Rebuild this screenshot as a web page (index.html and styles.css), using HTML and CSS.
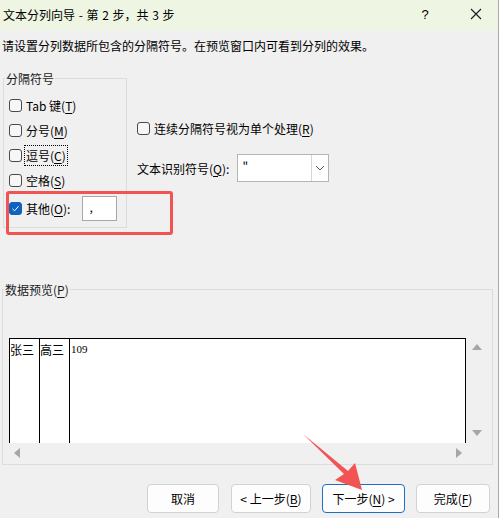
FILE: index.html
```html
<!DOCTYPE html>
<html lang="zh-CN">
<head>
    <meta charset="UTF-8">
    <meta name="viewport" content="width=device-width, initial-scale=1.0">
    <title>文本分列向导</title>
    <link rel="stylesheet" href="styles.css">
</head>
<body>
    <div class="window">
        <header class="titlebar">
            <span class="title">文本分列向导 - 第 2 步，共 3 步</span>
            <span class="help">?</span>
            <svg class="close" width="12" height="12" viewBox="0 0 12 12">
                <path d="M1 1 L11 11 M11 1 L1 11" stroke="#1a1a1a" stroke-width="1.1" fill="none"/>
            </svg>
        </header>

        <p class="intro">请设置分列数据所包含的分隔符号。在预览窗口内可看到分列的效果。</p>

        <section class="options">
            <fieldset class="group delimiters">
                <legend>分隔符号</legend>
                <div class="check"><span class="box"></span>Tab 键(<u>T</u>)</div>
                <div class="check"><span class="box"></span>分号(<u>M</u>)</div>
                <div class="check"><span class="box"></span><span class="focus">逗号(<u>C</u>)</span></div>
                <div class="check"><span class="box"></span>空格(<u>S</u>)</div>
                <div class="check other">
                    <span class="box checked">
                        <svg width="9" height="9" viewBox="0 0 9 9"><path d="M1.5 4.8 L3.6 6.8 L7.6 2.2" stroke="#fff" stroke-width="1" fill="none"/></svg>
                    </span>其他(<u>O</u>):
                    <span class="other-input">,</span>
                </div>
            </fieldset>

            <div class="side">
                <div class="check"><span class="box"></span>连续分隔符号视为单个处理(<u>R</u>)</div>
                <div class="qualifier">
                    <span>文本识别符号(<u>Q</u>):</span>
                    <div class="combo">
                        <span class="combo-value">"</span>
                        <span class="combo-btn">
                            <svg width="10" height="6" viewBox="0 0 10 6"><path d="M1 1 L5 5 L9 1" stroke="#555" stroke-width="1" fill="none"/></svg>
                        </span>
                    </div>
                </div>
            </div>
        </section>

        <fieldset class="group preview">
            <legend>数据预览(<u>P</u>)</legend>
            <div class="preview-row">
                <div class="sheet">
                    <div class="col">张三</div>
                    <div class="col">高三</div>
                    <div class="col last">109</div>
                </div>
                <div class="vscroll">
                    <span class="tri up"></span>
                    <span class="tri down"></span>
                </div>
            </div>
            <div class="hscroll">
                <span class="tri left"></span>
                <span class="tri right"></span>
            </div>
        </fieldset>

        <footer class="buttons">
            <button class="btn cancel">取消</button>
            <button class="btn back">&lt; 上一步(<u>B</u>)</button>
            <button class="btn next default">下一步(<u>N</u>) &gt;</button>
            <button class="btn finish">完成(<u>F</u>)</button>
        </footer>

        <div class="highlight"></div>
        <svg class="arrow" width="80" height="70" viewBox="300 430 80 70">
            <polygon points="303,434 348,471 355,463 362,490 335,480 344,474" fill="#f25353"/>
        </svg>
    </div>
</body>
</html>
```

FILE: styles.css
```css
/* General */
body {
    margin: 0;
    background-color: #ffffff;
    font-family: "Noto Sans CJK SC", sans-serif;
    font-size: 12px;
    color: #000;
}

.window {
    position: relative;
    width: 498px;
    height: 518px;
    background-color: #f0f0f0;
    border-right: 1px solid #a8a8a8;
    overflow: hidden;
}

u {
    text-decoration-thickness: 1px;
    text-underline-offset: 2px;
}

/* Title bar */
.titlebar {
    display: flex;
    align-items: center;
    height: 30px;
    background-color: #eff5e3;
    border-top-right-radius: 7px;
    padding-left: 3px;
}

.title {
    flex: 1;
    line-height: 18px;
    word-spacing: 1px;
}

.help {
    width: 16px;
    text-align: center;
    font-family: "Liberation Sans", sans-serif;
    font-size: 13px;
    margin-right: 37px;
    margin-top: -1px;
}

.close {
    margin-right: 16px;
    margin-top: -2px;
}

.intro {
    margin: 7px 0 15px 2px;
    line-height: 18px;
}

/* Group boxes */
.group {
    border: 1px solid #dcdcdc;
    margin: 0;
    padding: 0;
    box-sizing: border-box;
}

.group legend {
    padding: 0 1px;
    line-height: 17px;
    color: #1a1a1a;
}

.options {
    display: flex;
    align-items: flex-start;
}

.delimiters {
    width: 124px;
    margin-left: 3px;
    padding: 6px 0 5px 5px;
}

.delimiters legend {
    margin-left: -4px;
}

.check {
    display: flex;
    align-items: center;
    height: 25px;
    white-space: nowrap;
}

.box {
    width: 11px;
    height: 11px;
    border: 1px solid #4a4a4a;
    border-radius: 3px;
    background-color: #f7f7f7;
    margin-right: 4px;
    flex-shrink: 0;
    display: flex;
    align-items: center;
    justify-content: center;
}

.box.checked {
    background-color: #0f62be;
    border-color: #0f62be;
}

.focus {
    outline: 1px dotted #000;
    outline-offset: 1px;
    line-height: 17px;
}

.check.other {
    height: 28px;
    margin-top: 1px;
}

.other-input {
    width: 35px;
    height: 25px;
    margin-left: 12px;
    background-color: #fff;
    border: 1px solid #a8a8a8;
    padding-left: 6px;
    box-sizing: border-box;
    line-height: 20px;
}

.side {
    margin-left: 10px;
    padding-top: 48px;
}

.side .check {
    height: 20px;
}

.qualifier {
    display: flex;
    align-items: center;
    margin-top: 16px;
}

.combo {
    display: flex;
    width: 92px;
    height: 28px;
    margin-left: 8px;
    background-color: #fff;
    border: 1px solid #b4b4b4;
    box-sizing: border-box;
}

.combo-value {
    flex: 1;
    padding-left: 4px;
    line-height: 24px;
}

.combo-btn {
    width: 16px;
    border-left: 1px solid #d6d6d6;
    display: flex;
    align-items: center;
    justify-content: center;
}

/* Data preview */
.preview {
    width: 491px;
    margin: 53px 0 0 2px;
    padding: 40px 3px 1px 6px;
}

.preview legend {
    margin-left: -5px;
}

.preview-row {
    display: flex;
    height: 105px;
}

.sheet {
    display: flex;
    width: 457px;
    background-color: #fff;
    border: 1px solid #000;
    border-bottom: none;
    box-sizing: border-box;
}

.col {
    width: 29px;
    border-right: 1px solid #000;
    padding-top: 3px;
    line-height: 15px;
}

.col.last {
    flex: 1;
    border-right: none;
    font-family: "Liberation Serif", serif;
    font-size: 11px;
    padding-left: 1px;
}

.vscroll {
    width: 22px;
    display: flex;
    flex-direction: column;
    justify-content: space-between;
    align-items: center;
    padding: 6px 0 7px;
    box-sizing: border-box;
}

.hscroll {
    display: flex;
    justify-content: space-between;
    align-items: center;
    width: 457px;
    height: 20px;
    padding: 0 4px 0 5px;
    box-sizing: border-box;
}

.tri {
    width: 0;
    height: 0;
    border-style: solid;
    border-color: transparent;
}

.tri.up {
    border-width: 0 5px 6px;
    border-bottom-color: #a6a6a6;
}

.tri.down {
    border-width: 6px 5px 0;
    border-top-color: #a6a6a6;
}

.tri.left {
    border-width: 5px 6px 5px 0;
    border-right-color: #a6a6a6;
}

.tri.right {
    border-width: 5px 0 5px 6px;
    border-left-color: #a6a6a6;
}

/* Buttons */
.buttons {
    display: flex;
    justify-content: flex-end;
    gap: 11px;
    margin-top: 19px;
    padding-right: 8px;
}

.btn {
    height: 29px;
    background-color: #fdfdfd;
    border: 1px solid #d2d2d2;
    border-radius: 4px;
    font-family: "Noto Sans CJK SC", sans-serif;
    font-size: 12px;
    color: #000;
    padding: 0;
}

.cancel { width: 72px; margin-right: 1px; }
.back { width: 80px; }
.next { width: 83px; }
.finish { width: 74px; }

.btn.default {
    border-color: #1e6fc4;
}

/* Annotations */
.highlight {
    position: absolute;
    left: 6px;
    top: 191px;
    width: 161px;
    height: 38px;
    border: 3px solid #f25353;
    border-radius: 3px;
}

.arrow {
    position: absolute;
    left: 300px;
    top: 430px;
}
```
